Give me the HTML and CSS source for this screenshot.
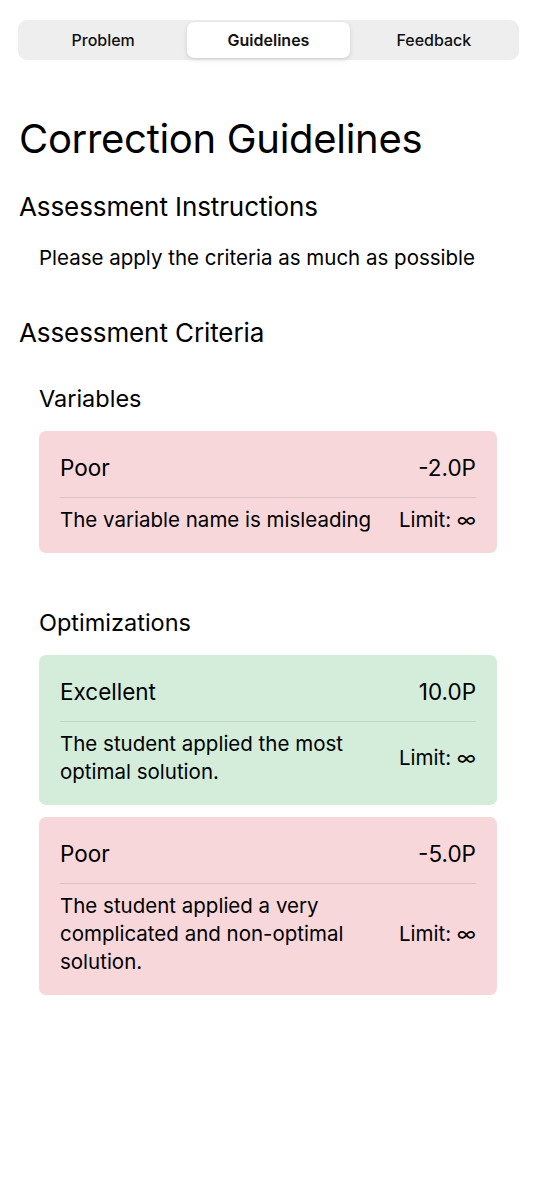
FILE: index.html
```
<!DOCTYPE html>
<html lang="en">
<head>
<meta charset="utf-8">
<link rel="stylesheet" href="styles.css">
</head>
<body>
<div class="page">
  <div class="segmented">
    <div class="seg">Problem</div>
    <div class="seg active">Guidelines</div>
    <div class="seg">Feedback</div>
  </div>

  <h1 class="title">Correction Guidelines</h1>

  <h2 class="section">Assessment Instructions</h2>
  <p class="instructions">Please apply the criteria as much as possible</p>

  <h2 class="section criteria-title">Assessment Criteria</h2>

  <div class="group">
    <h3 class="group-title">Variables</h3>
    <div class="cards">
      <div class="card poor">
        <div class="card-head"><span>Poor</span><span>-2.0P</span></div>
        <div class="divider"></div>
        <div class="card-body"><span class="desc">The variable name is misleading</span><span class="limit">Limit: ∞</span></div>
      </div>
    </div>
  </div>

  <div class="group group-2">
    <h3 class="group-title">Optimizations</h3>
    <div class="cards">
      <div class="card good">
        <div class="card-head"><span>Excellent</span><span>10.0P</span></div>
        <div class="divider"></div>
        <div class="card-body"><span class="desc">The student applied the most optimal solution.</span><span class="limit">Limit: ∞</span></div>
      </div>
      <div class="card poor">
        <div class="card-head"><span>Poor</span><span>-5.0P</span></div>
        <div class="divider"></div>
        <div class="card-body"><span class="desc">The student applied a very complicated and non-optimal solution.</span><span class="limit">Limit: ∞</span></div>
      </div>
    </div>
  </div>
</div>
</body>
</html>
```

FILE: styles.css
```
* { box-sizing: border-box; }
html, body { margin: 0; padding: 0; background: #fff; }
body {
  font-family: "Inter", "Noto Sans", sans-serif;
  color: #000;
}
.page {
  padding: 20px 15px 40px 19px;
}
.segmented {
  display: grid;
  grid-template-columns: 1fr 1fr 1fr;
  column-gap: 3px;
  height: 40px;
  margin-left: -1px;
  width: 501px;
  background: #eeeeef;
  border-radius: 9px;
  padding: 2px 4px;
}
.seg {
  display: flex;
  align-items: center;
  justify-content: center;
  font-size: 16px;
  font-weight: 500;
  color: #111;
  border-radius: 7px;
}
.seg.active {
  background: #fff;
  box-shadow: 0 2px 5px rgba(0,0,0,0.12), 0 0 1px rgba(0,0,0,0.08);
  font-weight: 600;
}
.title {
  margin: 55px 0 0;
  font-size: 40px;
  line-height: 48px;
  font-weight: 400;
  letter-spacing: -0.3px;
}
.section {
  margin: 28px 0 0;
  font-size: 26px;
  line-height: 32px;
  font-weight: 400;
  letter-spacing: -0.1px;
}
.instructions {
  margin: 23px 0 0 20px;
  font-size: 20.5px;
  line-height: 24px;
}
.criteria-title { margin-top: 47px; }
.group { margin: 36px 0 0 20px; width: 458px; }
.group-2 { margin-top: 56px; }
.group-title {
  margin: 0 0 18px;
  font-size: 23.5px;
  line-height: 28px;
  font-weight: 400;
}
.cards { display: flex; flex-direction: column; gap: 12px; }
.card {
  border-radius: 7px;
  padding: 20px 21px 19px;
}
.card.poor { background: #f8d7da; }
.card.good { background: #d4edda; }
.card-head {
  display: flex;
  justify-content: space-between;
  align-items: center;
  height: 32px;
  font-size: 22.5px;
}
.divider {
  height: 1px;
  margin-top: 14px;
  background: rgba(0,0,0,0.1);
}
.card-body {
  display: flex;
  align-items: center;
  gap: 20px;
  margin-top: 8px;
  font-size: 20.5px;
  line-height: 28px;
}
.desc { flex: 1; }
.limit { white-space: nowrap; }
```
